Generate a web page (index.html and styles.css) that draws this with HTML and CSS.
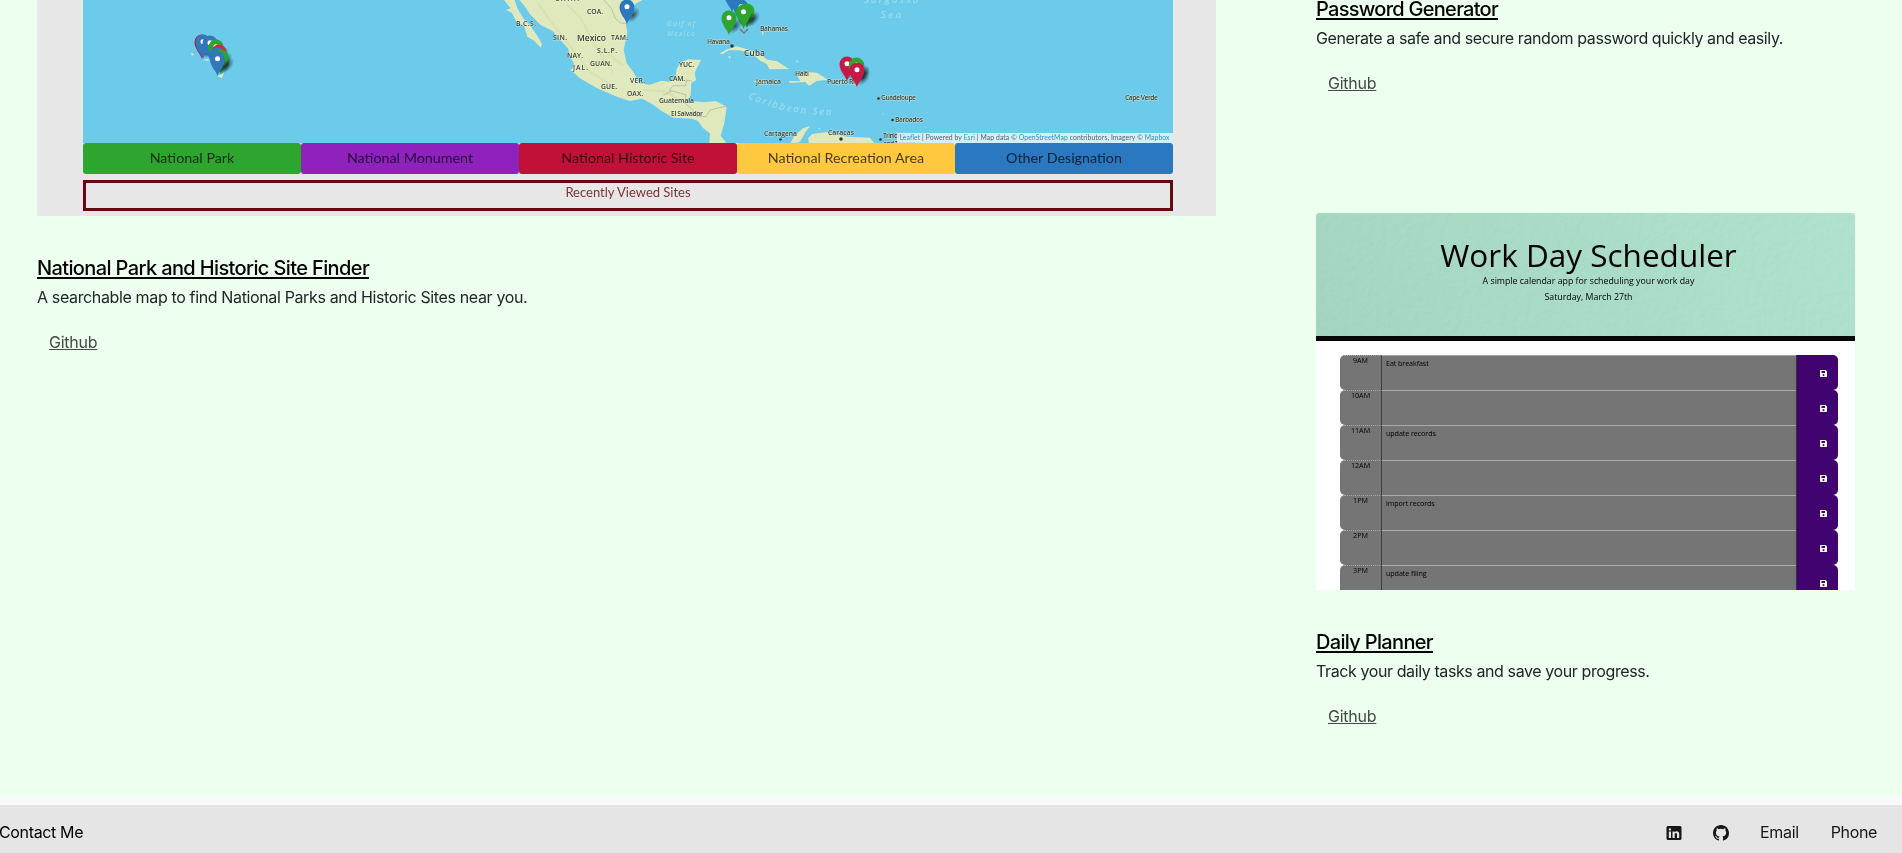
FILE: index.html
```html
<!DOCTYPE html>
<html lang="en">
<head>
<meta charset="utf-8">
<title>Portfolio</title>
<link rel="stylesheet" href="styles.css">
</head>
<body>
<svg class="defs" width="0" height="0">
  <defs>
    <radialGradient id="shade"><stop offset="0" stop-opacity=".6"/><stop offset="1" stop-opacity="0"/></radialGradient>
    <g id="pin"><ellipse cx="6" cy="-9" rx="9" ry="5.500" transform="rotate(-50 6 -9)" fill="url(#shade)"/><path d="M0 0C-2-6-7.500-10-7.500-17A7.500 7.500 0 0 1 7.500-17C7.500-10 2-6 0 0Z"/><circle cy="-17.300" r="2.500" fill="#fff"/></g>
    <filter id="paper" x="0" y="0" width="100%" height="100%"><feTurbulence type="fractalNoise" baseFrequency=".16" numOctaves="3" seed="4"/><feDiffuseLighting surfaceScale="1.2" diffuseConstant=".6" lighting-color="#fff"><feDistantLight azimuth="45" elevation="58"/></feDiffuseLighting></filter>
    <symbol id="save" viewBox="0 0 14 14"><path fill="#fff" fill-rule="evenodd" d="M1 0h10l3 3v10l-1 1H1l-1-1V1ZM3 2v4h7V2ZM7 8a2 2 0 1 0 .1 0Z"/></symbol>
  </defs>
</svg>
<main class="work">
  <article class="featured">
    <div class="parks">
      <svg class="map" viewBox="83 0 1090 143">
        <rect x="83" width="1090" height="143" fill="#6ccaea"/>
        <g transform="translate(480 0) scale(.33333)" fill="#e0e9bd">
          <path d="M72 0 104 0 112 25 131 56 151 78 172 107 186 132 183 143 160 121 142 110 132 77 109 66 96 38 78 30 92 25Z"/>
          <path d="M118 0 133 17 150 43 182 75 217 92 243 122 264 145 271 171 284 195 272 210 300 235 350 264 410 290 450 303 486 296 515 311 545 333 580 353 635 356 653 362 669 384 690 400 688 430 740 430 722 407 733 370 740 320 707 303 671 307 645 304 617 310 632 286 634 250 648 240 644 218 663 180 625 178 601 188 590 207 586 235 567 245 545 242 510 254 477 250 460 216 440 190 431 150 442 100 438 72 444 42 465 12 487 0Z"/>
          <path d="M717 162 738 149 770 139 801 148 842 165 862 179 891 184 927 207 868 208 861 193 839 181 815 160 777 151 747 151 728 162ZM744 169 754 170 749 176ZM925 243 961 244 953 229 981 216 1011 218 1044 239 1010 243 987 258 976 246 931 249ZM943 407 970 384 990 378 977 395 961 424 949 430 931 430ZM997 402 1040 396 1100 410 1170 413 1184 430 987 430 984 415ZM820 243 850 239 857 248 836 251Z"/>
          <path d="M845 94l6 3-2 12zM865 131l5 2zM948 181l8 3-5 4zM1193 284h3v2zM1204 323l3 3zM1208 340h3v5zM1015 385h5v4z"/>
          <g fill="none" stroke="#c9d2a6" stroke-width="5" opacity=".4"><path d="M175 12 230 88 278 148 330 215 403 260M260 12 302 54 340 126 399 219M370 150 429 197M490 270 556 274 600 300"/></g>
          <g fill="none" stroke="#a8b096" stroke-width="2"><path d="M372 0 395 27 405 54 422 69 440 70M614 310 618 284 568 271 579 257H617L620 240 636 244M550 285 574 274M614 310 638 328 650 350 678 350 691 330 740 318"/></g>
        </g>
        <g fill="#e0e9bd"><path d="M191 53l3 1-2 2zM203 60l5-1 1 2zM217 76l7-3-2 5zM1132 90l3 1zM1143 106l3 2zM1137 108h2z"/></g>
        <g class="place">
          <text x="555" y="1" textLength="24">CHIH.</text><text x="587" y="13.500" textLength="16">COA.</text><text x="516" y="26" textLength="20">B.C.S.</text><text x="553" y="39.500" textLength="14">SIN.</text><text class="big" x="577" y="41" textLength="29">Mexico</text><text x="611" y="39.500" textLength="17">TAM.</text><text x="597" y="53" textLength="20">S.L.P.</text><text x="567" y="58" textLength="16">NAY.</text><text x="590" y="65.500" textLength="22">GUAN.</text><text x="573" y="70" textLength="15">JAL.</text><text x="630" y="82.500" textLength="15">VER.</text><text x="601" y="89" textLength="16">GUE.</text><text x="627" y="96" textLength="16">OAX.</text><text x="679" y="67" textLength="15">YUC.</text><text x="669" y="81" textLength="16">CAM.</text>
          <text x="659" y="103" textLength="35">Guatemala</text><text x="671" y="116" textLength="32">El Salvador</text><text x="707" y="44" textLength="23">Havana</text><text class="mid" x="744" y="56" textLength="21">Cuba</text><text x="760" y="30.500" textLength="28">Bahamas</text><text x="795" y="76" textLength="14">Haiti</text><text x="756" y="84" textLength="25">Jamaica</text><text x="827" y="83.500" textLength="28">Puerto Ri</text><text x="881" y="100" textLength="35">Guadeloupe</text><text x="895" y="122" textLength="28">Barbados</text><text x="764" y="136" textLength="33">Cartagena</text><text x="828" y="135" textLength="26">Caracas</text><text x="883" y="138" textLength="22">Trinidad</text><text x="883" y="145.500" textLength="33">and Tobago</text><text x="1125" y="100" textLength="33">Cape Verde</text>
        </g>
        <g fill="#333"><circle cx="732" cy="46" r="1.700"/><circle cx="878.500" cy="98.500" r="1.300"/><circle cx="892.500" cy="120" r="1.300"/><circle cx="780.500" cy="139.500" r="1.300"/><circle cx="841" cy="139" r="1.800"/><circle cx="880.500" cy="139.500" r="1.300"/></g>
        <g class="sea"><text x="667" y="26" textLength="28">Gulf of</text><text x="667" y="36" textLength="28">Mexico</text><text class="wide" x="864" y="3" textLength="54">Sargasso</text><text class="wide" x="881" y="18" textLength="20">Sea</text><path id="curve" d="M748 98Q785 116 840 115" fill="none"/><text class="wide"><textPath href="#curve" textLength="86">Caribbean Sea</textPath></text></g>
        <g fill="#c70f3d"><use href="#pin" x="202" y="59"/></g>
        <g fill="#3078bb"><use href="#pin" x="203" y="59"/><use href="#pin" x="210" y="60"/></g>
        <use href="#pin" x="216" y="64" fill="#2da52e"/><use href="#pin" x="219" y="69" fill="#c72c4b"/><use href="#pin" x="217" y="72" fill="#3078bb"/><use href="#pin" x="221" y="74" fill="#2da52e"/><use href="#pin" x="217.500" y="76" fill="#3078bb"/>
        <use href="#pin" x="627" y="24" fill="#2b78bd"/><use href="#pin" x="732" y="12" fill="#2b78bd"/><use href="#pin" x="741" y="24" fill="#2b78bd"/><use href="#pin" x="747" y="28" fill="#2da52e"/><use href="#pin" x="743.500" y="29" fill="#2da52e"/><use href="#pin" x="729" y="35" fill="#2da52e"/>
        <path d="M740 29l4 4 4-4" fill="none" stroke="#777" stroke-width="1.500"/>
        <use href="#pin" x="847" y="81" fill="#c61943"/><use href="#pin" x="857" y="83" fill="#705db0"/><use href="#pin" x="856.500" y="82" fill="#2da52e"/><use href="#pin" x="857" y="87" fill="#c61943"/>
        <rect x="897" y="133" width="276" height="10" fill="#fff" opacity=".7"/>
        <text class="credit" x="899.500" y="139.800" textLength="270"><tspan class="lk">Leaflet</tspan> | Powered by <tspan class="lk">Esri</tspan> | Map data © <tspan class="lk">OpenStreetMap</tspan> contributors, Imagery © <tspan class="lk">Mapbox</tspan></text>
      </svg>
      <div class="legend"><span class="green">National Park</span><span class="purple">National Monument</span><span class="red">National Historic Site</span><span class="yellow">National Recreation Area</span><span class="blue">Other Designation</span></div>
      <div class="recent">Recently Viewed Sites</div>
    </div>
    <div class="caption">
      <h2 class="t-park">National Park and Historic Site Finder</h2>
      <p class="d-park">A searchable map to find National Parks and Historic Sites near you.</p>
      <a>Github</a>
    </div>
  </article>
  <div class="side">
    <article class="caption first">
      <h2 class="t-pass">Password Generator</h2>
      <p class="d-pass">Generate a safe and secure random password quickly and easily.</p>
      <a>Github</a>
    </article>
    <article>
      <div class="planner">
        <header class="banner">
          <svg class="texture"><rect width="100%" height="100%" filter="url(#paper)"/></svg>
          <h3>Work Day Scheduler</h3><p>A simple calendar app for scheduling your work day</p><p>Saturday, March 27th</p>
        </header>
        <div class="hours">
          <div class="row"><b>9AM</b><span>Eat breakfast</span><i><svg><use href="#save"/></svg></i></div>
          <div class="row"><b>10AM</b><span></span><i><svg><use href="#save"/></svg></i></div>
          <div class="row"><b>11AM</b><span>update records</span><i><svg><use href="#save"/></svg></i></div>
          <div class="row"><b>12AM</b><span></span><i><svg><use href="#save"/></svg></i></div>
          <div class="row"><b>1PM</b><span>import records</span><i><svg><use href="#save"/></svg></i></div>
          <div class="row"><b>2PM</b><span></span><i><svg><use href="#save"/></svg></i></div>
          <div class="row"><b>3PM</b><span>update filing</span><i><svg><use href="#save"/></svg></i></div>
        </div>
      </div>
      <div class="caption">
        <h2 class="t-day">Daily Planner</h2>
        <p class="d-day">Track your daily tasks and save your progress.</p>
        <a>Github</a>
      </div>
    </article>
  </div>
</main>
<footer class="footer">
  <span class="contact">Contact Me</span>
  <nav>
    <svg width="16" height="16" viewBox="0 0 16 16"><path fill="#171717" fill-rule="evenodd" d="M1.500 1h13l1 1v12l-1 1h-13l-1-1V2ZM2.800 6.500V13H5V6.500ZM3.900 3.200a1.200 1.200 0 1 0 .1 0ZM6.500 6.500V13h2.200V9.500c0-2 2.300-2 2.300 0V13h2.200V9c0-3.200-3.300-3.300-4.500-1.700V6.500Z"/></svg>
    <svg class="gh" width="16" height="16" viewBox="0 0 16 16"><path fill="#171717" d="M8 0C3.580 0 0 3.580 0 8c0 3.540 2.290 6.530 5.470 7.590.4.070.55-.17.55-.38 0-.19-.01-.82-.01-1.490-2.010.37-2.530-.49-2.690-.94-.09-.23-.48-.94-.82-1.130-.28-.15-.68-.52-.01-.53.63-.01 1.080.58 1.230.82.72 1.210 1.870.87 2.330.66.07-.52.280-.87.510-1.070-1.780-.2-3.640-.89-3.640-3.950 0-.87.310-1.590.82-2.150-.08-.2-.36-1.020.08-2.120 0 0 .67-.21 2.200.82a7.700 7.700 0 0 1 4 0c1.530-1.040 2.200-.82 2.200-.82.44 1.100.16 1.920.08 2.120.51.56.82 1.270.82 2.150 0 3.070-1.870 3.750-3.650 3.950.29.25.54.73.54 1.480 0 1.070-.01 1.930-.01 2.200 0 .21.15.46.55.38A8 8 0 0 0 16 8c0-4.420-3.580-8-8-8Z"/></svg>
    <span class="email">Email</span><span>Phone</span>
  </nav>
</footer>
</body>
</html>
```

FILE: styles.css
```css
* { box-sizing: border-box; }
body { margin: 0; height: 853px; overflow: hidden; background: #f8f9fa; font: 16px/24px Inter, "Liberation Sans", sans-serif; color: #212529; }
.defs { position: absolute; }
h2, h3, p { margin: 0; font-weight: 400; }
.work { height: 797px; padding-left: 37px; display: flex; gap: 100px; overflow: hidden; background: #edffee; }
.featured { width: 1179px; }
.parks { height: 216px; padding: 0 43px 0 46px; background: #e7e7e7; font-family: Lato, sans-serif; }
.map { display: block; width: 1090px; height: 143px; }
.place { font: 600 6.800px "Open Sans", sans-serif; fill: #383d36; stroke: #f3f5dd; stroke-width: 1px; stroke-opacity: .55; paint-order: stroke; }
.place .big { font-size: 8.500px; }
.place .mid { font-size: 8px; }
.sea { font: italic 7px "Open Sans", sans-serif; fill: #a5e0f3; }
.sea .wide { font-size: 9.500px; }
.credit { font: 6.800px Lato, sans-serif; fill: #54636b; }
.credit .lk { fill: #2f93b5; }
.legend { display: grid; grid-template-columns: repeat(5, 1fr); height: 31px; }
.legend span { border-radius: 3px; text-align: center; font-size: 14.300px; line-height: 30px; color: rgba(0, 0, 0, .72); white-space: nowrap; }
.legend .green { background: #2da52e; }
.legend .purple { background: #8f22bd; }
.legend .red { background: #c11138; }
.legend .yellow { background: #ffc93f; }
.legend .blue { background: #2a78bf; }
.recent { height: 31px; margin-top: 6px; border: 3px solid #640914; text-align: center; font-size: 13px; line-height: 18px; color: #803237; }
.caption { padding-top: 40px; white-space: nowrap; }
.caption h2 { height: 29px; font-size: 20px; line-height: 24px; font-weight: 500; color: #000; text-decoration: underline; text-decoration-thickness: 2px; text-underline-offset: 2px; text-decoration-skip-ink: none; }
.caption p { height: 45px; }
.caption .t-park { letter-spacing: -.62px; width: 333px; }
.caption .t-pass { letter-spacing: -.72px; }
.caption .t-day { letter-spacing: -.67px; }
.d-park { letter-spacing: -.36px; }
.d-pass { letter-spacing: -.41px; }
.d-day { letter-spacing: -.4px; }
.caption a { display: block; width: max-content; margin-left: 12px; color: #444a47; text-decoration: underline; text-underline-offset: 1px; letter-spacing: -.25px; }
.side { width: 539px; }
.first { height: 216px; margin-top: -3px; padding-top: 0; }
.planner { height: 377px; overflow: hidden; background: #fff; border-radius: 3px 3px 0 0; font-family: "Open Sans", sans-serif; color: #111; }
.banner { position: relative; height: 128px; padding-top: 22px; text-align: center; background: linear-gradient(60deg, #99d0b8, #a6dec6); border-bottom: 5px solid #050805; padding-left: 6px; }
.texture { position: absolute; left: 0; top: 0; width: 100%; height: 100%; mix-blend-mode: soft-light; opacity: .5; }
.banner h3 { font-size: 31.500px; line-height: 39px; color: #000; }
.banner p { font-size: 8.800px; line-height: 15.500px; color: #000; }
.banner h3, .banner p { position: relative; }
.hours { padding: 14px 17px 0 24px; }
.row { height: 35px; display: grid; grid-template-columns: 42px 1fr 42px; font-size: 7.200px; line-height: 8px; color: #000; }
.row b { font-weight: 400; text-align: center; background: #757575; border-radius: 5px 0 0 5px; border-right: 1px solid #3c3c3c; border-top: 1px dotted #aaa; }
.row span { padding: 3px 4px; letter-spacing: -.1px; background: #757575; border-top: 1px solid #aaa; }
.row i { padding: 15px 0 0 23px; background: #41036f; border-left: 1px solid #333; border-radius: 0 5px 5px 0; }
.row svg { display: block; width: 7px; height: 7px; }
.footer { height: 48px; margin-top: 8px; padding-right: 25px; display: flex; justify-content: space-between; background: #e5e5e5; line-height: 55px; color: #171717; letter-spacing: -.35px; }
.contact { margin-left: -1px; color: #000; }
.footer nav { display: flex; }
.footer nav svg { margin: 20px 31px 0 0; }
.footer .email { margin-right: 32px; }
```
